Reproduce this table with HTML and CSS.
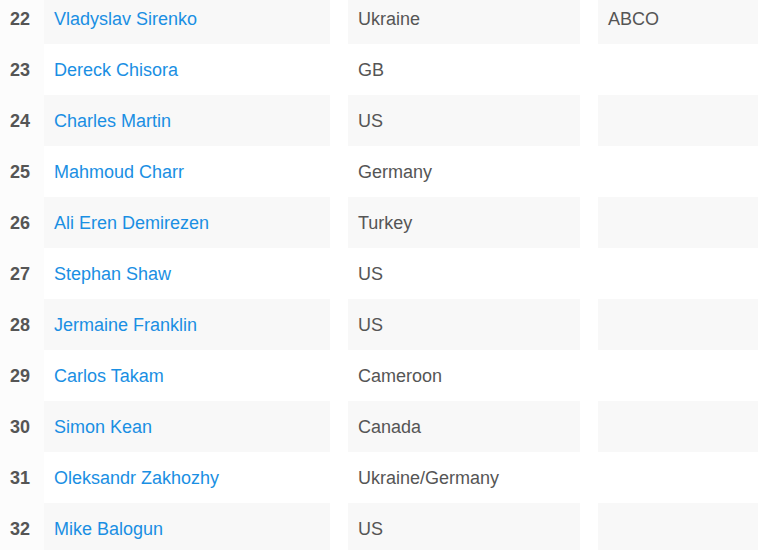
FILE: index.html
```html
<!DOCTYPE html>
<html>
<head>
<meta charset="utf-8">
<link rel="stylesheet" href="styles.css">
</head>
<body>
<div class="table">
  <div class="row alt"><div class="num">22</div><div class="name"><a href="#">Vladyslav Sirenko</a></div><div class="country">Ukraine</div><div class="org">ABCO</div></div>
  <div class="row"><div class="num">23</div><div class="name"><a href="#">Dereck Chisora</a></div><div class="country">GB</div><div class="org"></div></div>
  <div class="row alt"><div class="num">24</div><div class="name"><a href="#">Charles Martin</a></div><div class="country">US</div><div class="org"></div></div>
  <div class="row"><div class="num">25</div><div class="name"><a href="#">Mahmoud Charr</a></div><div class="country">Germany</div><div class="org"></div></div>
  <div class="row alt"><div class="num">26</div><div class="name"><a href="#">Ali Eren Demirezen</a></div><div class="country">Turkey</div><div class="org"></div></div>
  <div class="row"><div class="num">27</div><div class="name"><a href="#">Stephan Shaw</a></div><div class="country">US</div><div class="org"></div></div>
  <div class="row alt"><div class="num">28</div><div class="name"><a href="#">Jermaine Franklin</a></div><div class="country">US</div><div class="org"></div></div>
  <div class="row"><div class="num">29</div><div class="name"><a href="#">Carlos Takam</a></div><div class="country">Cameroon</div><div class="org"></div></div>
  <div class="row alt"><div class="num">30</div><div class="name"><a href="#">Simon Kean</a></div><div class="country">Canada</div><div class="org"></div></div>
  <div class="row"><div class="num">31</div><div class="name"><a href="#">Oleksandr Zakhozhy</a></div><div class="country">Ukraine/Germany</div><div class="org"></div></div>
  <div class="row alt"><div class="num">32</div><div class="name"><a href="#">Mike Balogun</a></div><div class="country">US</div><div class="org"></div></div>
</div>
</body>
</html>
```
FILE: styles.css
```css
html, body {
  margin: 0;
  padding: 0;
  background: #ffffff;
  overflow: hidden;
}
body {
  font-family: "Liberation Sans", Arial, sans-serif;
  font-size: 18px;
  color: #555555;
}
.table {
  margin-top: -7px;
  display: flex;
  flex-direction: column;
}
.row {
  display: flex;
  height: 51px;
}
.row > div {
  display: flex;
  align-items: center;
  padding-left: 10px;
  padding-top: 2px;
  box-sizing: border-box;
  height: 51px;
}
.num {
  width: 44px;
  flex: none;
  background: #fcfcfc;
  font-weight: bold;
  color: #555555;
}
.name {
  width: 286px;
  flex: none;
}
.name a {
  color: #1a8fe3;
  text-decoration: none;
}
.country {
  width: 232px;
  flex: none;
  margin-left: 18px;
}
.org {
  flex: 1;
  margin-left: 18px;
}
.row.alt .name,
.row.alt .country,
.row.alt .org {
  background: #f8f8f8;
}
```
